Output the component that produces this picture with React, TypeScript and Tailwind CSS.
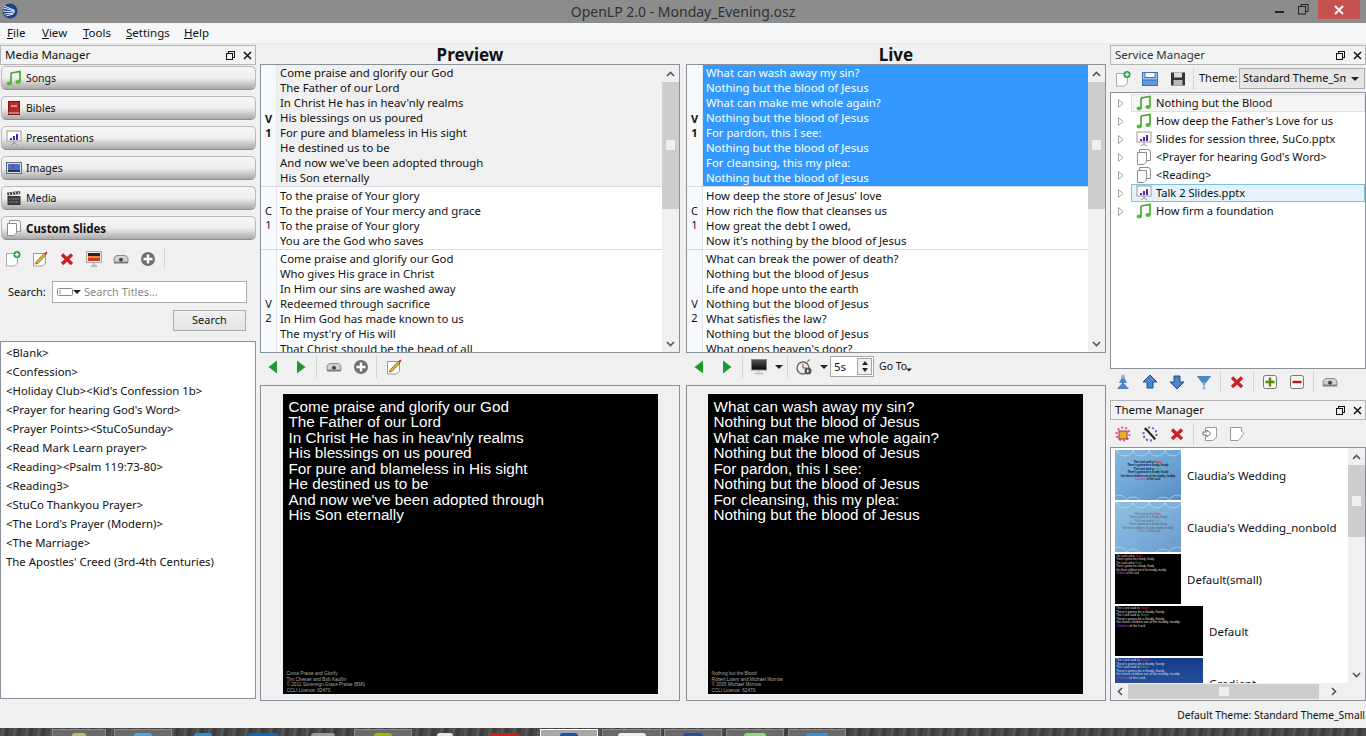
import React from "react";

const Svg = ({ w = 16, h = 16, children }: { w?: number; h?: number; children: React.ReactNode }) => (
  <svg width={w} height={h} viewBox={`0 0 ${w} ${h}`} className="shrink-0">{children}</svg>
);
const Note = () => (
  <Svg><path d="M5 3 L14 1.5 V12" fill="none" stroke="#3fa52b" strokeWidth="1.6" /><path d="M5 3 V13.5" stroke="#3fa52b" strokeWidth="1.6" /><ellipse cx="3.2" cy="13.5" rx="2.6" ry="1.9" fill="#52b83a" /><ellipse cx="12" cy="12" rx="2.6" ry="1.9" fill="#52b83a" /></Svg>
);
const Bible = () => (
  <Svg><rect x="2.5" y="1.5" width="11" height="13" fill="#b52a2a" stroke="#7c1616" /><rect x="2.5" y="12.5" width="11" height="1" fill="#e9c9c9" /><rect x="5" y="5" width="6" height="2" fill="#e08a8a" /></Svg>
);
const Pres = () => (
  <Svg><rect x="1" y="1" width="14" height="10" fill="#fff" stroke="#9a9a9a" /><rect x="4" y="8" width="2" height="2" fill="#5b1fb0" /><rect x="7" y="6" width="2" height="4" fill="#5b1fb0" /><rect x="10" y="4" width="2" height="6" fill="#5b1fb0" /><path d="M8 11 V14 M5 15 L8 13 L11 15" stroke="#9a9a9a" fill="none" /></Svg>
);
const Img = () => (
  <Svg><rect x="0.5" y="2.5" width="15" height="11" fill="#d6e2ee" stroke="#667" /><rect x="2" y="4" width="12" height="8" fill="#3c72c8" /><path d="M4 4 L9 4 L7 9 Z" fill="#7b3fa5" /><rect x="2" y="10" width="12" height="2" fill="#334" /></Svg>
);
const Clap = () => (
  <Svg><rect x="1.5" y="6" width="13" height="9" fill="#3a3a3a" /><path d="M1 2.5 L14 1 L14.5 4 L1.5 5.5 Z" fill="#444" /><path d="M3 2.5 L4 5 M6 2 L7 5 M9 2 L10 4.5 M12 1.5 L13 4" stroke="#ddd" /><path d="M3 9 H13 M3 12 H13" stroke="#777" /></Svg>
);
const Pages = () => (
  <Svg>
    <path d="M3.5 0.5 H12 Q14.5 0.5 14.5 3 V11.5 H3.5 Z" fill="#fff" stroke="#8e8e8e" />
    <path d="M1.5 3.5 H10.5 V13 L8 15.5 H1.5 Z" fill="#fff" stroke="#8e8e8e" />
  </Svg>
);
const NewP = () => (
  <Svg><path d="M1.5 2.5 H12.5 V12 L9.5 15 H1.5 Z" fill="#fff" stroke="#a8a8a8" /><circle cx="12" cy="3.5" r="3.5" fill="#18a53a" /><path d="M12 1.5 V5.5 M10 3.5 H14" stroke="#fff" strokeWidth="1.3" /></Svg>
);
const Edit = () => (
  <Svg><path d="M1.5 2.5 H13.5 V12 L10.5 15 H1.5 Z" fill="#fff" stroke="#9a9a9a" /><path d="M4 11 L12 2.5 L14 4 L6 12.5 L3.5 13 Z" fill="#e3b52f" stroke="#6a5a10" strokeWidth=".7" /><path d="M12.5 2 L14.5 0.5 L15.5 2 L14 3.5 Z" fill="#c83030" /></Svg>
);
const Del = () => (
  <Svg><path d="M3 3.5 L13 13 M13 3.5 L3 13" stroke="#c8212a" strokeWidth="3.4" /></Svg>
);
const Live = () => (
  <Svg>
    <rect x="0.5" y="0.5" width="15" height="11" fill="#e8e8e8" stroke="#aaa" />
    <rect x="2" y="2" width="12" height="8" fill="#c73a28" />
    <rect x="2" y="2" width="12" height="3" fill="#3a1c28" />
    <rect x="2" y="5" width="12" height="2" fill="#ef8b24" />
    <path d="M8 12 V14 M5 15 H11" stroke="#aaa" strokeWidth="1.4" />
  </Svg>
);
const Proj = () => (
  <Svg><path d="M1 9 Q1 4.5 5 4.5 H11 Q15 4.5 15 9 V11 H1 Z" fill="#d2d2d2" stroke="#8c8c8c" /><circle cx="8" cy="8.8" r="2.5" fill="#445" stroke="#eee" strokeWidth=".7" /><rect x="1" y="11" width="14" height="1.5" fill="#7c7c7c" /></Svg>
);
const PlusC = () => (
  <Svg><circle cx="8" cy="8" r="7" fill="#6f6f6f" /><path d="M8 3.5 V12.5 M3.5 8 H12.5" stroke="#fff" strokeWidth="2.4" /></Svg>
);
const Grn = ({ d }: { d: "l" | "r" }) => (
  <Svg w={10} h={14}><path d={d === "l" ? "M9 0.5 V13.5 L0.5 7 Z" : "M1 0.5 V13.5 L9.5 7 Z"} fill="#1d9a2d" /></Svg>
);
const Sep = () => <div className="w-px h-[22px] bg-[#d4d4d4] mx-[4px] shrink-0" />;
const Caret = () => <div className="w-0 h-0 border-l-[4px] border-r-[4px] border-t-[4px] border-l-transparent border-r-transparent border-t-[#222] shrink-0" />;

const Dock = ({ title, grey }: { title: string; grey?: boolean }) => (
  <div className="h-[20px] border border-[#b4b4b4] bg-[#f2f2f2] flex items-center justify-between pl-[4px] pr-[2px] shrink-0">
    <span className={grey ? "text-[#333]" : "text-[#111]"}>{title}</span>
    <div className="flex items-center gap-[6px]">
      <svg width="11" height="11" viewBox="0 0 11 11"><rect x="3.5" y="1.5" width="6" height="6" fill="none" stroke="#111" /><rect x="1.5" y="3.5" width="6" height="6" fill="#f2f2f2" stroke="#111" /></svg>
      <svg width="11" height="11" viewBox="0 0 11 11"><path d="M2 2 L9 9 M9 2 L2 9" stroke="#111" strokeWidth="1.5" /></svg>
    </div>
  </div>
);

const Accordion = ({ icon, label, bold }: { icon: React.ReactNode; label: string; bold?: boolean }) => (
  <div className="h-[24px] mb-[6px] rounded-[5px] border border-[#b9b9b9] border-b-[#8e8e8e] bg-gradient-to-b from-[#f6f6f6] via-[#efefef] to-[#a9a9a9] flex items-center pl-[4px] gap-[4px] shrink-0">
    <div className="w-[16px] flex justify-center">{icon}</div>
    <span className={bold ? "font-bold text-[11.5px] pt-px" : "text-[10.5px] pt-[2px]"}>{label}</span>
  </div>
);

const Arrow = ({ up }: { up?: boolean }) => (
  <svg width="9" height="6" viewBox="0 0 9 6"><path d={up ? "M1 5 L4.5 1.5 L8 5" : "M1 1 L4.5 4.5 L8 1"} fill="none" stroke="#555" strokeWidth="1.6" /></svg>
);

const VScroll = ({ thumb, grip }: { thumb: number; grip: number }) => (
  <div className="w-[17px] shrink-0 bg-[#f0f0f0] flex flex-col items-center">
    <div className="h-[17px] flex items-center justify-center shrink-0"><Arrow up /></div>
    <div className="flex-1 w-full min-h-0 flex flex-col">
      <div className="bg-[#cdcdcd] w-full flex flex-col items-center shrink-0" style={{ height: thumb, paddingTop: grip }}>
        <div className="w-[9px] h-[10px] bg-[#efefef]" />
      </div>
    </div>
    <div className="h-[17px] flex items-center justify-center shrink-0"><Arrow /></div>
  </div>
);

type Row = { tag: string; num: string; lines: string[] };
const previewRows: Row[] = [
  { tag: "V", num: "1", lines: ["Come praise and glorify our God", "The Father of our Lord", "In Christ He has in heav'nly realms", "His blessings on us poured", "For pure and blameless in His sight", "He destined us to be", "And now we've been adopted through", "His Son eternally"] },
  { tag: "C", num: "1", lines: ["To the praise of Your glory", "To the praise of Your mercy and grace", "To the praise of Your glory", "You are the God who saves"] },
  { tag: "V", num: "2", lines: ["Come praise and glorify our God", "Who gives His grace in Christ", "In Him our sins are washed away", "Redeemed through sacrifice", "In Him God has made known to us", "The myst'ry of His will", "That Christ should be the head of all"] },
];
const liveRows: Row[] = [
  { tag: "V", num: "1", lines: ["What can wash away my sin?", "Nothing but the blood of Jesus", "What can make me whole again?", "Nothing but the blood of Jesus", "For pardon, this I see:", "Nothing but the blood of Jesus", "For cleansing, this my plea:", "Nothing but the blood of Jesus"] },
  { tag: "C", num: "1", lines: ["How deep the store of Jesus' love", "How rich the flow that cleanses us", "How great the debt I owed,", "Now it's nothing by the blood of Jesus"] },
  { tag: "V", num: "2", lines: ["What can break the power of death?", "Nothing but the blood of Jesus", "Life and hope unto the earth", "Nothing but the blood of Jesus", "What satisfies the law?", "Nothing but the blood of Jesus", "What opens heaven's door?"] },
];

const SlideTable = ({ rows, live }: { rows: Row[]; live?: boolean }) => (
  <div className="h-[289px] border border-[#8a9099] bg-white flex overflow-hidden shrink-0 text-[11.35px]">
    <div className="flex-1 min-w-0 overflow-hidden">
      {rows.map((r, i) => (
        <div key={i} className={(i === 2 ? "h-[122px] " : "") + "flex border-b border-[#d5dae4]"}>
          <div className={(i === 0 ? "font-bold " : "") + "w-[16px] shrink-0 bg-[#f7f9fd] border-r border-[#e2e6ef] flex flex-col items-center justify-center text-[11px] leading-[14px] text-[#111]"}>
            <span>{r.tag}</span>
            <span>{r.num}</span>
          </div>
          <div className={"flex-1 pl-[3px] pb-px " + (i === 0 ? "" : "pt-px ") + (i === 0 ? (live ? "bg-[#3399ff] text-white" : "bg-[#f0f0f0] text-[#111]") : "text-[#111]")}>
            {r.lines.map((l, j) => <div key={j} className="h-[15px] leading-[15px] whitespace-nowrap">{l}</div>)}
          </div>
        </div>
      ))}
    </div>
    <VScroll thumb={127} grip={58} />
  </div>
);

const Screen = ({ lines, foot, live }: { lines: string[]; foot: string[]; live?: boolean }) => (
  <div className={(live ? "pr-[2px] " : "") + "border border-[#8a9099] bg-[#f0f0f0] flex items-center justify-center pt-[2px] mt-[5px] h-[316px] shrink-0"}>
    <div className="w-[375px] h-[300px] bg-black flex flex-col justify-between pl-[6px] pr-[6px] pt-[5px] pb-px font-['Liberation_Sans',sans-serif] text-white">
      <div className="text-[15.25px] leading-[15.45px]">{lines.map((l, i) => <div key={i} className="whitespace-nowrap">{l}</div>)}</div>
      <div className="text-[4.7px] leading-[5.5px] text-[#a8a8a8] -ml-[2px]">{foot.map((l, i) => <div key={i}>{l}</div>)}</div>
    </div>
  </div>
);

const Rings = () => (
  <svg width="66" height="50" viewBox="0 0 66 50" className="absolute left-0 top-0">
    <g fill="none" stroke="#d8e6f0" strokeWidth=".7" opacity=".8">
      <circle cx="10" cy="-3" r="9" /><circle cx="26" cy="-3" r="9" /><circle cx="42" cy="-3" r="9" /><circle cx="58" cy="-3" r="9" />
      <circle cx="4" cy="53" r="8" /><circle cx="18" cy="56" r="9" /><circle cx="48" cy="56" r="9" /><circle cx="62" cy="53" r="8" />
    </g>
  </svg>
);

const Thumb = ({ kind, wide }: { kind: "blue" | "pale" | "black" | "grad"; wide?: boolean }) => {
  const bg = kind === "blue" ? "bg-gradient-to-br from-[#86b8dc] via-[#6ea6d6] to-[#5c8cc4] text-[#0a1018] text-center font-bold pt-[11px]" : kind === "pale" ? "bg-gradient-to-br from-[#8fc0e0] via-[#7db0da] to-[#6a98cc] text-[#4a5c70] text-center pt-[11px]" : kind === "black" ? "bg-black text-[#ddd] pt-px pl-px" : "bg-gradient-to-b from-[#123a8a] to-[#3a65ad] text-[#ddd] pt-px pl-px";
  const size = wide ? "w-[88px] text-[3.3px] leading-[3.6px]" : kind === "black" ? "w-[66px] text-[2.6px] leading-[3.4px]" : "w-[66px] text-[2.6px] leading-[3.4px]";
  return (
    <div className={"relative h-[50px] shrink-0 overflow-hidden whitespace-nowrap font-['Liberation_Sans',sans-serif] " + size + " " + bg}>
      {(kind === "blue" || kind === "pale") && <Rings />}
      <div>The Lord said to <span className="text-[#e02030]">Noah:</span></div>
      <div>There's gonna be a floody, floody</div>
      <div>The Lord said to <span className="text-[#40b040]">Noah:</span></div>
      <div>There's gonna be a floody, floody</div>
      <div>Get those children out of the muddy, muddy</div>
      <div><span className="text-[#c040c0]">Children</span> of the Lord</div>
    </div>
  );
};

const themes: { name: string; kind: "blue" | "pale" | "black" | "grad"; wide?: boolean }[] = [
  { name: "Claudia's Wedding", kind: "blue" },
  { name: "Claudia's Wedding_nonbold", kind: "pale" },
  { name: "Default(small)", kind: "black" },
  { name: "Default", kind: "black", wide: true },
  { name: "Gradient", kind: "grad", wide: true },
];

const tree: { name: string; icon: React.ReactNode; cls?: string }[] = [
  { name: "Nothing but the Blood", icon: <Note />, cls: "bg-[#f5f5f5] border-[#e0e0e0]" },
  { name: "How deep the Father's Love for us", icon: <Note /> },
  { name: "Slides for session three, SuCo.pptx", icon: <Pres /> },
  { name: "<Prayer for hearing God's Word>", icon: <Pages /> },
  { name: "<Reading>", icon: <Pages /> },
  { name: "Talk 2 Slides.pptx", icon: <Pres />, cls: "bg-[#e4f3fb] border-[#7cc0e4]" },
  { name: "How firm a foundation", icon: <Note /> },
];

const customs = ["<Blank>", "<Confession>", "<Holiday Club><Kid's Confession 1b>", "<Prayer for hearing God's Word>", "<Prayer Points><StuCoSunday>", "<Read Mark Learn prayer>", "<Reading><Psalm 119:73-80>", "<Reading3>", "<StuCo Thankyou Prayer>", "<The Lord's Prayer (Modern)>", "<The Marriage>", "The Apostles' Creed (3rd-4th Centuries)"];

const Mn = ({ t, cls }: { t: string; cls: string }) => (
  <span className={cls}><span className="underline">{t[0]}</span>{t.slice(1)}</span>
);

const taskItems: { w: number; gap: number; on: boolean; c: string; iw: number; act?: boolean }[] = [
  { w: 54, gap: 52, on: true, c: "#c9b56a", iw: 14 },
  { w: 58, gap: 8, on: true, c: "#4aa8e0", iw: 18 },
  { w: 58, gap: 2, on: false, c: "#2a8fc8", iw: 18 },
  { w: 58, gap: 2, on: false, c: "#1466b8", iw: 30 },
  { w: 58, gap: 2, on: false, c: "#9a9a9a", iw: 24 },
  { w: 58, gap: 2, on: true, c: "#8cc000", iw: 18 },
  { w: 58, gap: 4, on: false, c: "#e6e6e6", iw: 16 },
  { w: 58, gap: 2, on: false, c: "#c82020", iw: 30 },
  { w: 58, gap: 6, on: true, c: "#2050a8", iw: 18, act: true },
  { w: 59, gap: 4, on: true, c: "#eeeeee", iw: 28 },
  { w: 58, gap: 3, on: true, c: "#2850a0", iw: 20 },
  { w: 58, gap: 4, on: true, c: "#90d880", iw: 22 },
  { w: 58, gap: 4, on: true, c: "#3a90e0", iw: 22 },
];

export default function App() {
  return (
    <div className="w-[1366px] h-[736px] overflow-hidden flex flex-col bg-[#f0f0f0] font-['Noto_Sans',sans-serif] text-[11.5px] text-[#111]">
      {/* title bar */}
      <div className="h-[23px] bg-[#8c8c8c] flex items-center shrink-0">
        <div className="w-[103px] shrink-0 flex items-center">
          <svg width="16" height="16" viewBox="0 0 16 16" className="ml-[2px] mb-[2px]">
            <circle cx="8" cy="8" r="7.5" fill="#1f3f87" />
            <path d="M1 5 L13 8 M1 8 L13 9 M2 11 L12 10 M4 13 L11 11 M2 3 L12 7" stroke="#e8eef8" strokeWidth="1" />
          </svg>
        </div>
        <div className="flex-1 text-center text-[14px] text-[#2e3238]">OpenLP 2.0 - Monday_Evening.osz</div>
        <div className="w-[103px] shrink-0 flex items-start h-full pr-[6px]">
          <div className="w-[32px] h-[19px] flex items-center justify-center"><div className="w-[9px] h-[2px] bg-[#222] mt-[4px]" /></div>
          <div className="w-[16px] h-[19px] flex items-center justify-center mr-[7px]">
            <svg width="11" height="11" viewBox="0 0 11 11"><rect x="3" y="0.5" width="7" height="7" fill="none" stroke="#222" /><rect x="0.5" y="2.5" width="7" height="7.5" fill="#8c8c8c" stroke="#222" /></svg>
          </div>
          <div className="w-[42px] h-[19px] bg-[#c75050] flex items-center justify-center">
            <svg width="10" height="10" viewBox="0 0 10 10"><path d="M1 1 L9 9 M9 1 L1 9" stroke="#fff" strokeWidth="1.8" /></svg>
          </div>
        </div>
      </div>
      {/* menu */}
      <div className="h-[21px] bg-[#f5f6f7] border-b border-[#e9e9e9] flex items-center pl-[7px] text-[11.5px] shrink-0">
        <Mn t="File" cls="w-[35px]" />
        <Mn t="View" cls="w-[41px]" />
        <Mn t="Tools" cls="w-[43px]" />
        <Mn t="Settings" cls="w-[58px]" />
        <Mn t="Help" cls="" />
      </div>
      {/* body */}
      <div className="flex-1 min-h-0 flex pt-px">
        {/* left */}
        <div className="w-[256px] shrink-0 flex flex-col">
          <Dock title="Media Manager" />
          <div className="h-px" />
          <div className="pl-px">
            <Accordion icon={<Note />} label="Songs" />
            <Accordion icon={<Bible />} label="Bibles" />
            <Accordion icon={<Pres />} label="Presentations" />
            <Accordion icon={<Img />} label="Images" />
            <Accordion icon={<Clap />} label="Media" />
            <Accordion icon={<Pages />} label="Custom Slides" bold />
          </div>
          <div className="h-[24px] flex items-center pl-[5px] gap-[11px] mt-px">
            <NewP /><Edit /><Del /><Live /><Proj /><PlusC />
            <div className="w-px h-[20px] bg-[#d4d4d4] -ml-[3px]" />
          </div>
          <div className="flex items-center pl-[8px] mt-[10px] h-[22px] text-[11px]">
            <span className="w-[44px]">Search:</span>
            <div className="w-[195px] h-[22px] border border-[#ababab] bg-white flex items-center pl-[4px] gap-0">
              <svg width="16" height="8" viewBox="0 0 16 8"><rect x="0.5" y="0.5" width="15" height="7" rx="1" fill="#fff" stroke="#8a8a8a" /><path d="M3 2 V6" stroke="#888" /></svg>
              <Caret />
              <span className="text-[#8a8a8a] pl-[3px]">Search Titles...</span>
            </div>
          </div>
          <div className="flex justify-end pr-[10px] mt-[7px] text-[11px]">
            <div className="w-[73px] h-[21px] border border-[#acacac] bg-gradient-to-b from-[#f0f0f0] to-[#e5e5e5] flex items-center justify-center">Search</div>
          </div>
          <div className="mt-[10px] h-[358px] border border-[#8a9099] bg-white pl-[5px] pt-[1px] text-[11.35px]">
            {customs.map((c) => <div key={c} className="h-[19px] leading-[19px] whitespace-nowrap">{c}</div>)}
          </div>
        </div>

        {/* preview */}
        <div className="w-[420px] shrink-0 ml-[4px] flex flex-col">
          <div className="h-[19px] leading-[19px] text-center font-bold text-[17px] shrink-0">Preview</div>
          <SlideTable rows={previewRows} />
          <div className="h-[27px] flex items-center pl-[8px] shrink-0">
            <Grn d="l" /><div className="w-[18px]" /><Grn d="r" />
            <div className="w-[6px]" /><Sep />
            <div className="w-[5px]" />
            <Proj /><div className="w-[11px]" /><PlusC />
            <div className="w-[3px]" /><Sep /><div className="w-[5px]" /><Edit />
          </div>
          <Screen
            lines={previewRows[0].lines}
            foot={["Come Praise and Glorify", "Tim Chester and Bob Kauflin", "© 2011 Sovereign Grace Praise (BMI)", "CCLI Licence: 62470"]}
          />
        </div>

        {/* live */}
        <div className="w-[420px] shrink-0 ml-[6px] flex flex-col">
          <div className="h-[19px] leading-[19px] text-center font-bold text-[17px] shrink-0">Live</div>
          <SlideTable rows={liveRows} live />
          <div className="h-[27px] flex items-center pl-[8px] shrink-0">
            <Grn d="l" /><div className="w-[18px]" /><Grn d="r" />
            <div className="w-[6px]" /><Sep /><div className="w-[4px]" />
            <svg width="16" height="16" viewBox="0 0 16 16" className="shrink-0"><defs><linearGradient id="mon" x1="0" y1="0" x2="0" y2="1"><stop offset="0" stopColor="#555" /><stop offset="1" stopColor="#050505" /></linearGradient></defs><rect x="0.5" y="0.5" width="15" height="10.5" fill="url(#mon)" stroke="#888" /><path d="M8 11 V13 M4 14.5 H12" stroke="#bbb" strokeWidth="1.5" /></svg>
            <div className="w-[8px]" /><Caret />
            <Sep /><div className="w-[4px]" />
            <svg width="16" height="16" viewBox="0 0 16 16" className="shrink-0"><circle cx="7" cy="9" r="6" fill="#eee" stroke="#666" strokeWidth="1.4" /><path d="M7 5 V9 H10" stroke="#a33" fill="none" /><circle cx="12" cy="12" r="3.5" fill="#555" /><path d="M11 10.5 V13.5 L13.5 12 Z" fill="#fff" /><path d="M11 3 L14 0.5" stroke="#888" strokeWidth="1.2" /></svg>
            <div className="w-[8px]" /><Caret />
            <div className="w-[44px] h-[21px] ml-[2px] border border-[#a5a5a5] bg-white flex items-center pl-[3px] justify-between shrink-0">
              <span>5s</span>
              <div className="w-[15px] h-[17px] mr-px border border-[#a5a5a5] bg-[#f0f0f0] flex flex-col items-center justify-around">
                <div className="w-0 h-0 border-l-[3.5px] border-r-[3.5px] border-b-[4px] border-l-transparent border-r-transparent border-b-[#222]" />
                <div className="w-0 h-0 border-l-[3.5px] border-r-[3.5px] border-t-[4px] border-l-transparent border-r-transparent border-t-[#222]" />
              </div>
            </div>
            <span className="pl-[5px] text-[10.5px] whitespace-nowrap">Go To</span>
            <div className="mt-[7px] scale-75 -ml-[2px]"><Caret /></div>
          </div>
          <Screen
            live
            lines={liveRows[0].lines}
            foot={["Nothing but the Blood", "Robert Lowry and Michael Morrow", "© 2005 Michael Morrow", "CCLI Licence: 62470"]}
          />
        </div>

        {/* right */}
        <div className="flex-1 min-w-0 ml-[4px] flex flex-col">
          <Dock title="Service Manager" grey />
          <div className="h-[27px] flex items-center pl-[5px] shrink-0">
            <NewP />
            <div className="w-[11px]" />
            <Svg><rect x="0.5" y="1.5" width="15" height="13" fill="#9cc3ec" stroke="#3574bd" /><rect x="3" y="1.5" width="10" height="5" fill="#fff" stroke="#3574bd" /><rect x="0.5" y="9" width="15" height="5.5" fill="#5d9bdb" stroke="#3574bd" /></Svg>
            <div className="w-[12px]" />
            <Svg><rect x="1" y="1.5" width="14" height="13" fill="#333" /><rect x="4" y="1.5" width="8" height="5" fill="#ddd" /><rect x="3.5" y="9" width="9" height="5.5" fill="#bbb" /></Svg>
            <div className="w-[3px]" /><Sep />
            <span className="w-[41px] text-[11px] pl-px">Theme:</span>
            <div className="w-[126px] h-[21px] border border-[#acacac] bg-[#e6e6e6] flex items-center pl-[3px] justify-between pr-[5px] overflow-hidden text-[11px]">
              <span className="whitespace-nowrap overflow-hidden w-[103px]">Standard Theme_Small</span>
              <Caret />
            </div>
          </div>
          <div className="h-[277px] border border-[#8a9099] bg-white pt-[1px] shrink-0 text-[11.1px]">
            {tree.map((t) => (
              <div key={t.name} className="h-[18px] flex items-center">
                <div className="w-[20px] flex justify-center shrink-0">
                  <svg width="6" height="9" viewBox="0 0 6 9"><path d="M0.5 0.5 L5 4.5 L0.5 8.5 Z" fill="#fff" stroke="#a6a6a6" /></svg>
                </div>
                <div className={"flex-1 h-[18px] flex items-center pl-[4px] gap-[4px] border " + (t.cls ?? "border-transparent")}>
                  {t.icon}
                  <span className="whitespace-nowrap">{t.name}</span>
                </div>
              </div>
            ))}
          </div>
          <div className="h-[26px] flex items-center pl-[5px] gap-[11px] shrink-0">
            <Svg><path d="M8 1 L12 9 H4 Z" fill="#4d86c6" /><path d="M2 15 L8 8 L14 15 Z" fill="#4d86c6" /><circle cx="8" cy="2.5" r="2" fill="#8db3dd" /></Svg>
            <Svg><path d="M8 1 L15 8 H11 V14 H5 V8 H1 Z" fill="#4d86c6" stroke="#20508f" /></Svg>
            <Svg><path d="M8 15 L15 8 H11 V2 H5 V8 H1 Z" fill="#4d86c6" stroke="#20508f" /></Svg>
            <Svg><path d="M1 2 H15 L10 9 H6 Z" fill="#4d86c6" /><path d="M6 8 H10 L8 13 Z" fill="#6d9ed6" /><circle cx="8" cy="14" r="1.6" fill="#8db3dd" /></Svg>
            <div className="-mx-[7px]"><Sep /></div>
            <Del />
            <div className="-mx-[7px]"><Sep /></div>
            <Svg><rect x="1.5" y="1.5" width="13" height="13" rx="2" fill="#f5f5f0" stroke="#777" /><path d="M8 3.5 V12.5 M3.5 8 H12.5" stroke="#5a8a00" strokeWidth="2.4" /></Svg>
            <Svg><rect x="1.5" y="1.5" width="13" height="13" rx="2" fill="#f5f5f0" stroke="#777" /><path d="M3.5 8 H12.5" stroke="#b01818" strokeWidth="2.4" /></Svg>
            <div className="-mx-[7px]"><Sep /></div>
            <Proj />
          </div>
          <div className="h-[5px] shrink-0" />
          <Dock title="Theme Manager" />
          <div className="h-[27px] flex items-center pl-[5px] gap-[11px] shrink-0">
            <Svg><circle cx="8" cy="8" r="6.5" fill="none" stroke="#d05a9c" strokeWidth="2" strokeDasharray="2 2" /><rect x="4" y="5" width="8" height="8" fill="#e8b030" stroke="#a33" /></Svg>
            <Svg><circle cx="8" cy="8" r="6.5" fill="none" stroke="#7a5ab8" strokeWidth="2" strokeDasharray="2 2" /><path d="M3 2 L13 13" stroke="#222" strokeWidth="2" /></Svg>
            <Del />
            <div className="-mx-[7px]"><Sep /></div>
            <Svg><path d="M3.5 1.5 H14.5 V11 L11 14.5 H3.5 Z" fill="#fff" stroke="#999" /><path d="M1 6 H5 V4 L9 7.5 L5 11 V9 H1 Z" fill="#fff" stroke="#777" /></Svg>
            <Svg><path d="M1.5 1.5 H12.5 V5 L15 7.5 L12.5 10 V11 L9 14.5 H1.5 Z" fill="#fff" stroke="#999" /></Svg>
          </div>
          <div className="h-[254px] border border-[#8a9099] bg-[#f0f0f0] flex flex-col shrink-0">
            <div className="flex flex-1 min-h-0">
              <div className="flex-1 min-w-0 bg-white overflow-hidden pl-[4px] pt-[2px] rounded-br-[3px]">
                {themes.map((t) => (
                  <div key={t.name} className="h-[50px] mb-[2px] flex items-center">
                    <Thumb kind={t.kind} wide={t.wide} />
                    <span className="pl-[6px] pt-px whitespace-nowrap">{t.name}</span>
                  </div>
                ))}
              </div>
              <VScroll thumb={72} grip={31} />
            </div>
            <div className="h-[17px] flex items-center shrink-0 bg-[#f0f0f0]">
              <div className="w-[17px] flex justify-center"><svg width="6" height="9" viewBox="0 0 6 9"><path d="M5 1 L1.5 4.5 L5 8" fill="none" stroke="#555" strokeWidth="1.6" /></svg></div>
              <div className="w-[191px] h-[15px] bg-[#cdcdcd] flex items-center justify-center"><div className="w-[10px] h-[9px] bg-[#efefef]" /></div>
              <div className="flex-1 flex justify-center"><svg width="6" height="9" viewBox="0 0 6 9"><path d="M1 1 L4.5 4.5 L1 8" fill="none" stroke="#555" strokeWidth="1.6" /></svg></div>
              <div className="w-[17px]" />
            </div>
          </div>
          <div className="h-[27px] flex items-center justify-end pr-[1px] pt-[2px] text-[10.3px] text-[#111]">Default Theme: Standard Theme_Small</div>
        </div>
      </div>
      {/* taskbar */}
      <div className="h-[8px] bg-[repeating-linear-gradient(100deg,#3f3f3f_0px,#5a5a5a_3px,#383838_7px,#4e4e4e_12px)] flex shrink-0 overflow-hidden">
        {taskItems.map((t, i) => (
          <div key={i} className={"shrink-0 h-[7px] mt-px border-t border-l border-r flex justify-center items-start " + (t.act ? "bg-[#a8a8a8] border-white" : t.on ? "bg-[#6a6a6a] border-[#8c8c8c]" : "border-transparent")} style={{ width: t.w, marginLeft: t.gap }}>
            <div className="h-[3px] mt-[3px] rounded-t-[3px]" style={{ background: t.c, width: t.iw }} />
          </div>
        ))}
      </div>
    </div>
  );
}
